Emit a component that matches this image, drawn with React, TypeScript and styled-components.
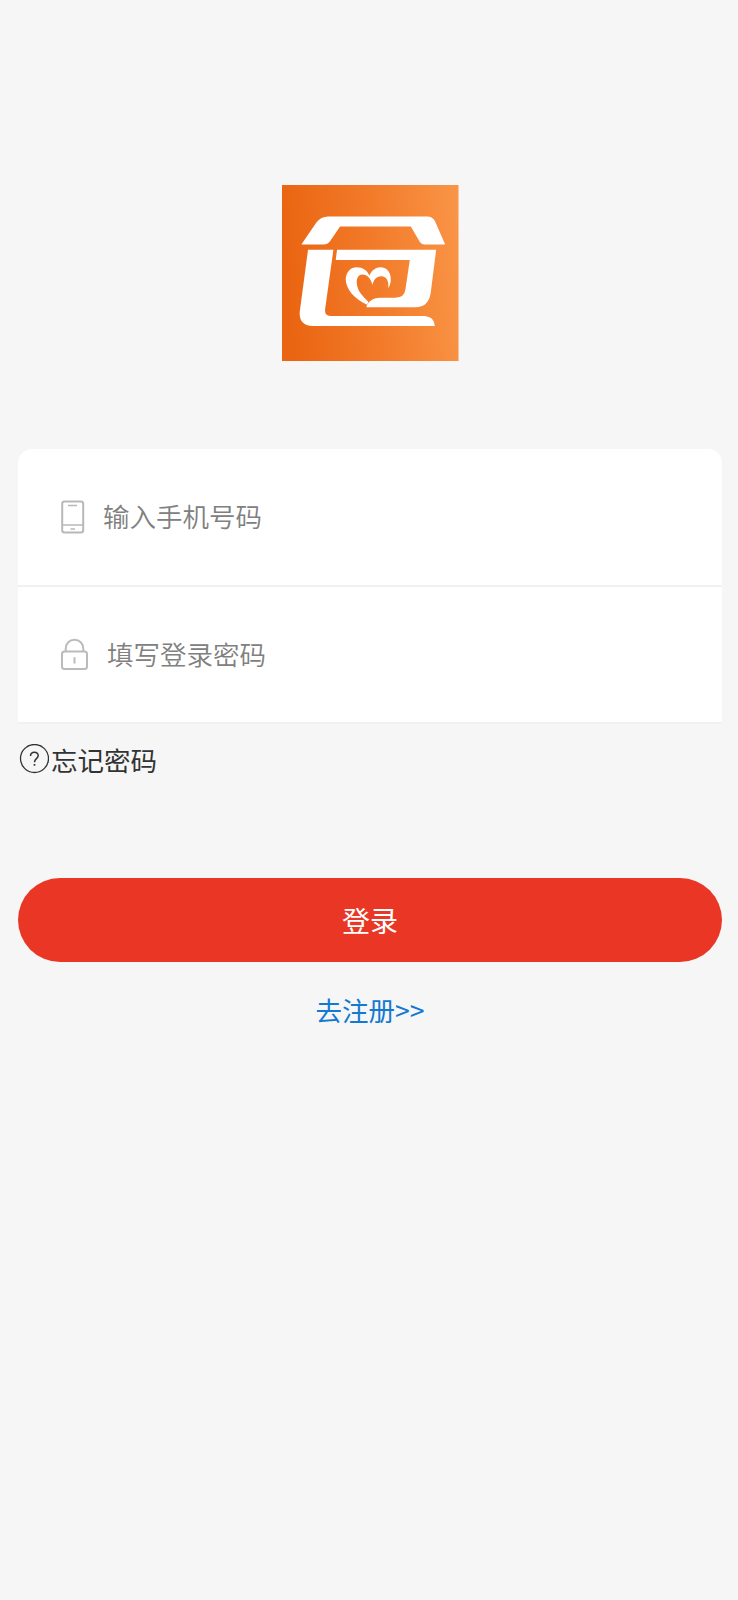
import React from "react";
import styled, { createGlobalStyle } from "styled-components";

const GlobalStyle = createGlobalStyle`
  * { box-sizing: border-box; }
  body {
    margin: 0;
    background: #f6f6f6;
    font-family: "Noto Sans CJK SC", sans-serif;
  }
`;

const Page = styled.main`
  display: flex;
  flex-direction: column;
  min-height: 1600px;
  padding: 184.5px 16px 0 18px;
  background: #f6f6f6;
`;

const Logo = styled.svg`
  display: block;
  width: 176.5px;
  height: 176.5px;
  margin-left: 264px;
`;

const Card = styled.div`
  margin-top: 88px;
  border-radius: 14px 14px 0 0;
  background: #fff;
`;

const Field = styled.label`
  display: flex;
  align-items: center;
  gap: 18px;
  height: 137.5px;
  padding-left: 42px;
  border-bottom: 2px solid #f1f1f1;

  svg { flex: none; }
`;

const Input = styled.input`
  flex: 1;
  height: 48px;
  margin-bottom: 2px;
  padding: 0;
  border: 0;
  outline: 0;
  background: transparent;
  color: #333;
  font: 350 26.5px "Noto Sans CJK SC", sans-serif;

  &::placeholder { color: #808080; opacity: 1; }
`;

const Forgot = styled.a`
  display: flex;
  align-items: center;
  align-self: flex-start;
  gap: 2px;
  height: 40px;
  margin-top: 15px;
  padding-left: 1px;
  color: #333;
  font-size: 26.5px;
  line-height: 40px;
`;

const ForgotText = styled.span`
  padding-top: 2px;
`;

const LoginButton = styled.button`
  height: 84px;
  margin-top: 99px;
  padding: 0;
  border: 0;
  border-radius: 42px;
  background: #e93625;
  color: #fff;
  font: 400 28px "Noto Sans CJK SC", sans-serif;
`;

const Register = styled.a`
  align-self: center;
  margin-top: 28px;
  color: #1479d0;
  font-size: 26.5px;
  line-height: 40px;
`;

export default function App() {
  return (
    <Page>
      <GlobalStyle />
      <Logo viewBox="36 29 529 528" preserveAspectRatio="none">
        <defs>
          <linearGradient id="brand" x1="0" y1="0.08" x2="1" y2="0">
            <stop offset="0" stopColor="#ea6512" />
            <stop offset="0.5" stopColor="#f27b2a" />
            <stop offset="1" stopColor="#fa9547" />
          </linearGradient>
        </defs>
        <rect x="36" y="29" width="529" height="528" fill="url(#brand)" />
        <g fill="#fff">
          <path d="M94 207 L139 141 Q152 123 174 123 H470 Q488 123 495 138 L525 207 H464 Q452 207 447 196 L422 153 H210 L182 194 Q174 207 160 207 Z" />
          <path d="M114 223 H190 L165 402 Q164 421 181 421 H464 Q492 423 494 451 H127 Q87 449 89 410 Z" />
          <path d="M201 223 H498 L482 350 Q476 395 435 395 H289 L291 387 Q304 366 328 366 H376 Q403 366 406 341 L419 253 H197 Z" />
          <path d="M291 387 C251 369 228 341 227 311 C228 289 242 275 260 275 C278 275 291 284 298 300 C305 283 319 274 333 275 C353 276 364 294 362 316 Q361 330 354 338 C357 320 351 304 336 302 C320 300 311 311 307 328 C302 308 290 296 276 297 C263 298 258 311 261 329 C265 349 278 362 295 378 Z" />
        </g>
      </Logo>

      <Card>
        <Field>
          <svg width="25" height="34" viewBox="0 0 25 34" fill="none" stroke="#b8b8b8" strokeWidth="2">
            <rect x="2.2" y="1.5" width="21" height="31" rx="2.2" />
            <path d="M2 25H23M8 5.5H17M10.5 29H15" strokeWidth="1.6" />
          </svg>
          <Input type="tel" placeholder="输入手机号码" />
        </Field>
        <Field>
          <svg width="29" height="32" viewBox="0 -0.5 29 32" fill="none" stroke="#bbb" strokeWidth="2">
            <rect x="2" y="13" width="25" height="17.5" rx="2.5" />
            <path d="M5.7 13V10.5C5.7 5 9.5 1.2 14.5 1.2S23.3 5 23.3 10.5V13M14.5 18.8V25" />
          </svg>
          <Input type="password" placeholder="填写登录密码" />
        </Field>
      </Card>

      <Forgot>
        <svg width="30" height="30" viewBox="0 0 30 30" fill="none" stroke="#333">
          <circle cx="15.5" cy="14.5" r="14" strokeWidth="1.3" />
          <path d="M11.5 12C11.6 6.8 19.4 7.2 19.2 11.6C19.1 14.6 15.5 14.8 15.5 18.2" strokeWidth="1.5" />
          <path d="M15.5 20V21.7" strokeWidth="1.7" />
        </svg>
        <ForgotText>忘记密码</ForgotText>
      </Forgot>

      <LoginButton type="button">登录</LoginButton>
      <Register>去注册&gt;&gt;</Register>
    </Page>
  );
}
